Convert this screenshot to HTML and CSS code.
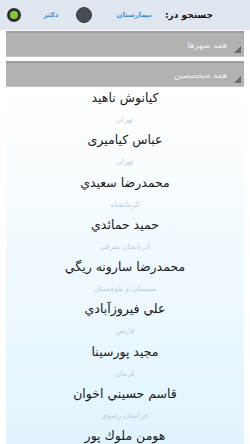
FILE: index.html
```html
<!DOCTYPE html>
<html lang="fa">
<head>
    <meta charset="UTF-8">
    <title>جستجو</title>
    <link rel="stylesheet" href="styles.css">
</head>
<body>

<!-- نوار بالا: نوع جستجو -->
<div class="search-bar">
    <i class="radio radio-on"></i>
    <span class="opt opt-doctor" dir="rtl">دکتر</span>
    <i class="radio radio-off"></i>
    <span class="opt opt-hospital" dir="rtl">بیمارستان</span>
    <span class="search-label" dir="rtl">جستجو در:</span>
</div>

<!-- فیلترها -->
<div class="select"><span class="select-text" dir="rtl">همه شهرها</span><i class="corner"></i></div>
<div class="select"><span class="select-text" dir="rtl">همه متخصصین</span><i class="corner"></i></div>

<!-- لیست پزشکان -->
<div class="doctor-list" dir="rtl">
    <div class="row"><div class="name">کیانوش ناهید</div><div class="city">تهران</div></div>
    <div class="row"><div class="name">عباس کیامیری</div><div class="city">تهران</div></div>
    <div class="row"><div class="name">محمدرضا سعیدي</div><div class="city">کرمانشاه</div></div>
    <div class="row"><div class="name">حمید حمائدي</div><div class="city">آذربایجان شرقي</div></div>
    <div class="row"><div class="name">محمدرضا سارونه ریگي</div><div class="city">سیستان و بلوچستان</div></div>
    <div class="row"><div class="name">علي فیروزآبادي</div><div class="city">فارس</div></div>
    <div class="row"><div class="name">مجید پورسینا</div><div class="city">کرمان</div></div>
    <div class="row"><div class="name">قاسم حسیني اخوان</div><div class="city">خراسان رضوي</div></div>
    <div class="row"><div class="name">هومن ملوك پور</div><div class="city">تهران</div></div>
</div>

</body>
</html>
```

FILE: styles.css
```css
html, body{ margin: 0; padding: 0; }
body{
    width: 250px;
    height: 444px;
    overflow: hidden;
    background: #fff;
    font-family: "DejaVu Sans", "Noto Sans", sans-serif;
}

.search-bar{
    display: flex;
    align-items: center;
    height: 30px;
    padding: 0 0 0 7px;
    background: #dfe6ef;
}
.search-label{
    width: 50px;
    margin-left: 9px;
    text-align: center;
    white-space: nowrap;
    font-size: 9px;
    font-weight: bold;
    color: #111;
}
.opt{
    text-align: center;
    white-space: nowrap;
    font-size: 7px;
    font-weight: bold;
    color: #3c8fd6;
}
.opt-doctor{ width: 24px; margin-left: 18px; }
.opt-hospital{ width: 42px; margin-left: 21px; }
.radio{
    display: block;
    flex: none;
    border-radius: 50%;
    box-sizing: border-box;
}
.radio-off{
    width: 16px;
    height: 16px;
    margin-left: 13px;
    background: #474c53;
    border: 1px solid #35393e;
}
.radio-on{
    width: 14px;
    height: 14px;
    background: #86c83a;
    border: 3px solid #2f3330;
}

.select{
    display: flex;
    justify-content: flex-end;
    height: 26px;
    margin: 1px 6px 4px;
    box-sizing: border-box;
    font-size: 8.5px;
    color: #eef0f2;
    background: #b2b2b2;
    border-top: 2px solid #9d9d9d;
    border-bottom: 1px solid #c4c4c4;
}
.select + .select{ margin-top: 0; }
.select-text{
    align-self: center;
    margin-right: 7px;
}
.corner{
    align-self: flex-end;
    width: 0;
    height: 0;
    margin: 0 3px 3px 0;
    border-left: 7px solid transparent;
    border-bottom: 7px solid #6b6b6b;
}

.doctor-list{
    margin: 0 6px;
    height: 356px;
    overflow: hidden;
    background: linear-gradient(#ffffff, #e0f4fd);
    text-align: center;
}
.row{ height: 42.25px; }
.name{
    height: 18px;
    line-height: 13px;
    font-size: 12.5px;
    color: #1a1a1a;
}
.city{
    line-height: 22px;
    font-size: 7.5px;
    color: #b9cdd8;
}
```
